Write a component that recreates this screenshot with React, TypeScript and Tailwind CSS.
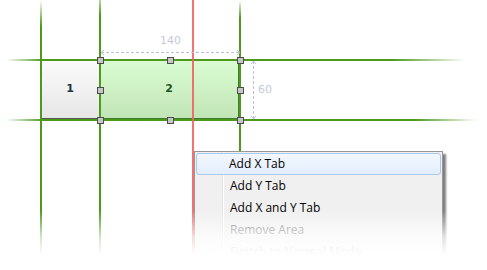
const handles = [
  [100, 60], [170, 60], [240, 60],
  [100, 90], [240, 90],
  [100, 120], [170, 120], [240, 120],
];

const menuItems = [
  { label: "Add X Tab", active: true },
  { label: "Add Y Tab" },
  { label: "Add X and Y Tab" },
  { label: "Remove Area", disabled: true },
  { label: "Switch to Normal Mode", disabled: true },
];

const Handle = ({ x, y }: { x: number; y: number }) => (
  <div
    className="absolute w-[7px] h-[7px] -ml-[3px] -mt-[3px] bg-[#c6c6c6] border border-[#4d4d4d]"
    style={{ left: x, top: y }}
  />
);

export default function App() {
  return (
    <div className="relative w-[487px] h-[270px] bg-white overflow-hidden font-['DejaVu_Sans',sans-serif]">
      {/* cells */}
      <div className="absolute left-[40px] top-[60px] w-[60px] h-[60px] flex items-center justify-center bg-linear-to-b from-[#fbfbfb] to-[#e6e6e6] border-b-2 border-[#555]">
        <span className="text-[11px] font-bold text-[#1b3542]">1</span>
      </div>
      <div className="absolute left-[100px] top-[60px] w-[140px] h-[60px] flex items-center justify-center bg-linear-to-b from-[#dafcd2] to-[#c2e5b7] border-b-2 border-r-2 border-[#3d7d2a]">
        <span className="text-[11px] font-bold text-[#1d5526]">2</span>
      </div>

      {/* grid lines */}
      <div className="absolute left-[40px] top-0 w-[2px] h-[262px] bg-linear-to-b from-white/0 via-[#4b9a1c] via-10% to-[#4b9a1c]" />
      <div className="absolute left-[99px] top-0 w-[2px] h-[262px] bg-linear-to-b from-[#4b9a1c]/40 via-[#4b9a1c] via-6% to-[#4b9a1c]" />
      <div className="absolute left-[239px] top-0 w-[2px] h-[152px] bg-linear-to-b from-white/0 via-[#4b9a1c] via-12% to-[#4b9a1c]" />
      <div className="absolute left-[6px] top-[59px] w-[460px] h-[2px] [background-image:linear-gradient(to_right,rgba(75,154,28,0)_0%,#4b9a1c_8%,#4b9a1c_84%,rgba(75,154,28,0)_100%)]" />
      <div className="absolute left-[6px] top-[119px] w-[470px] h-[2px] [background-image:linear-gradient(to_right,rgba(75,154,28,0)_0%,#4b9a1c_8%,#4b9a1c_87%,rgba(75,154,28,0)_100%)]" />
      <div className="absolute left-[192px] top-0 w-[2px] h-[270px] bg-[#f06464]/90" />

      {handles.map(([x, y]) => (
        <Handle key={`${x}-${y}`} x={x} y={y} />
      ))}

      {/* dimensions */}
      <svg className="absolute left-0 top-0" width="487" height="140">
        <g stroke="#bcc1d6" strokeWidth="1" fill="none">
          <line x1="101" y1="52.5" x2="240" y2="52.5" strokeDasharray="3 2" />
          <polyline points="104,50 101,52.5 104,55" />
          <polyline points="237,50 240,52.5 237,55" />
          <line x1="253.5" y1="61" x2="253.5" y2="119" strokeDasharray="3 2" />
          <polyline points="251,64 253.5,61 256,64" />
          <polyline points="251,116 253.5,119 256,116" />
        </g>
      </svg>
      <span className="absolute left-[160px] top-[33px] text-[11px] text-[#c6cad6]">140</span>
      <span className="absolute left-[258px] top-[82px] text-[11px] text-[#c6cad6]">60</span>

      {/* context menu */}
      <div className="absolute left-[194px] top-[151px] w-[249px] h-[130px] bg-[#f0f0f0] border border-[#979797] shadow-[3px_3px_2px_rgba(0,0,0,0.5)] p-[1px] font-['Open_Sans',sans-serif] text-[12px]">
        <div className="absolute left-[27px] top-0 bottom-0 w-px bg-[#e2e3e3]" />
        <div className="absolute left-[28px] top-0 bottom-0 w-px bg-white" />
        <div className="relative flex flex-col">
          {menuItems.map((item) => (
            <div
              key={item.label}
              className={
                item.active
                  ? "h-[22px] flex items-center pl-[32px] rounded-[3px] border border-[#a9cbf2] bg-linear-to-b from-[#f2f7fe] to-[#e3eefc] text-black"
                  : item.disabled
                  ? "h-[22px] flex items-center pl-[33px] border border-transparent text-[#777]"
                  : "h-[22px] flex items-center pl-[33px] border border-transparent text-black"
              }
            >
              {item.label}
            </div>
          ))}
        </div>
      </div>

      {/* bottom fade */}
      <div className="absolute inset-x-0 top-[210px] h-[60px] bg-linear-to-b from-white/0 via-white/75 via-45% to-white to-75%" />
    </div>
  );
}
